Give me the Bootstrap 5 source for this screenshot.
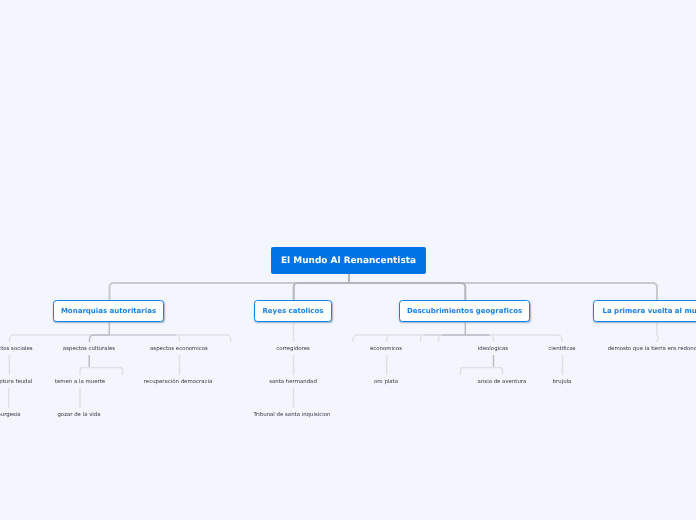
<!DOCTYPE html>
<html lang="es"><head><meta charset="utf-8"><title>El Mundo Al Renancentista</title>
<link href="https://cdn.jsdelivr.net/npm/bootstrap@5.3.0/dist/css/bootstrap.min.css" rel="stylesheet">
<style>
html,body{margin:0;height:100%;background:#f3f6fe;overflow:hidden}
.mapa{position:relative;width:696px;height:520px;overflow:hidden;font-family:"DejaVu Sans",sans-serif;text-rendering:geometricPrecision}
.lineas{position:absolute;left:0;top:0}
.lineas path{fill:none;stroke-linecap:butt}
.l1{stroke:#c8cad1;stroke-width:2}
.l1o{stroke:#b5b6bb;stroke-width:2}
.l2{stroke:#dfe1e9;stroke-width:1.500}
.l2o{stroke:#bcbdc3;stroke-width:1.500}
.raiz,.rama,.hoja{position:absolute;white-space:nowrap;text-align:center;will-change:transform}
.raiz{left:271px;top:247px;width:155px;height:27px;line-height:29px;background:#0073e6;color:#fff;font-size:8.950px;font-weight:700;border-radius:2px}
.rama{top:300px;height:21.500px;line-height:20.500px;background:#fff;color:#1580e8;border:1.500px solid #1580e8;border-radius:3.500px;font-size:7px;font-weight:700;box-shadow:.5px 1px 1.500px rgba(40,70,130,.4)}
.hoja{font-size:5.400px;color:#33333b;line-height:8px;transform:translateX(-50%)}
</style></head><body>
<div class="mapa">
<svg class="lineas" width="696" height="520" viewBox="0 0 696 520">
<path class="l1" d="M109.500 300V287a4 4 0 0 1 4-4H653a4 4 0 0 1 4 4V300"/>
<path class="l1o" d="M349 274V283M293.700 300V287a4 4 0 0 1 4-4H461.300a4 4 0 0 1 4 4V300"/>
<path class="l2" d="M9.500 342V339a4 4 0 0 1 4-4H226.700a4 4 0 0 1 4 4V342"/>
<path class="l2" d="M179.500 342V339a4 4 0 0 0-4-4"/>
<path class="l2o" d="M109.300 321V335M109.300 335H93.500a4 4 0 0 0-4 4V342"/>
<path class="l2o" d="M109.300 335H175.500" opacity=".6"/>
<path class="l2" d="M9.300 355V375M8.700 388V408"/>
<path class="l2o" d="M89.200 355V367.500"/>
<path class="l2" d="M80 375V370a2.500 2.500 0 0 1 2.500-2.500H120a2.500 2.500 0 0 1 2.500 2.500V375"/>
<path class="l2" d="M80 388V408"/>
<path class="l2" d="M179.500 355V370a5 5 0 0 1-1 5"/>
<path class="l2" d="M293.500 321V342M293.500 355V375M293.500 388V404a4 4 0 0 1-.600 4"/>
<path class="l2" d="M353 342V339a4 4 0 0 1 4-4H558a4 4 0 0 1 4 4V342"/>
<path class="l2" d="M386.700 342V339a4 4 0 0 1 4-4M420.500 342V339a4 4 0 0 1 4-4M438.500 342V339a4 4 0 0 1 4-4M493.500 342V339a4 4 0 0 0-4-4"/>
<path class="l2o" d="M465.300 321V335M465.300 335H442.500M465.300 335H489.500" />
<path class="l2o" d="M442.500 335H424.500" opacity=".4"/>
<path class="l2" d="M386.700 355V375M562.500 355V375"/>
<path class="l2o" d="M493.500 355V367.500"/>
<path class="l2" d="M460.500 375V370a2.500 2.500 0 0 1 2.500-2.500H500a2.500 2.500 0 0 1 2.500 2.500V375"/>
<path class="l2" d="M656.700 321V334a6 6 0 0 1-.600 8"/>
</svg>
<div class="raiz">El Mundo Al Renancentista</div>
<div class="rama" style="left:53px;width:111px">Monarquias autoritarias</div>
<div class="rama" style="left:254px;width:78px">Reyes catolicos</div>
<div class="rama" style="left:399px;width:131px">Descubrimientos geograficos</div>
<div class="rama" style="left:593px;width:128px">La primera vuelta al mundo</div>
<div class="hoja" style="left:9px;top:345px">aspectos sociales</div>
<div class="hoja" style="left:88.700px;top:345px">aspectos culturales</div>
<div class="hoja" style="left:179px;top:345px">aspectos economicos</div>
<div class="hoja" style="left:13px;top:378px">ruptura feudal</div>
<div class="hoja" style="left:79.500px;top:378px">temen a la muerte</div>
<div class="hoja" style="left:178px;top:378px">recuperación democracia</div>
<div class="hoja" style="left:9px;top:411px">burgesia</div>
<div class="hoja" style="left:79px;top:411px">gozar de la vida</div>
<div class="hoja" style="left:292.500px;top:345px">corregidores</div>
<div class="hoja" style="left:292.500px;top:378px">santa hermandad</div>
<div class="hoja" style="left:292px;top:411px">Tribunal de santa inquisicion</div>
<div class="hoja" style="left:386.300px;top:345px">economicos</div>
<div class="hoja" style="left:386px;top:378px">oro plata</div>
<div class="hoja" style="left:493px;top:345px">ideologicas</div>
<div class="hoja" style="left:502px;top:378px">ansia de aventura</div>
<div class="hoja" style="left:561.500px;top:345px">cientificas</div>
<div class="hoja" style="left:561.500px;top:378px">brujula</div>
<div class="hoja" style="left:654px;top:345px">demosto que la tierra era redonda</div>
</div>
<script src="https://cdn.jsdelivr.net/npm/bootstrap@5.3.0/dist/js/bootstrap.bundle.min.js"></script>
</body></html>
